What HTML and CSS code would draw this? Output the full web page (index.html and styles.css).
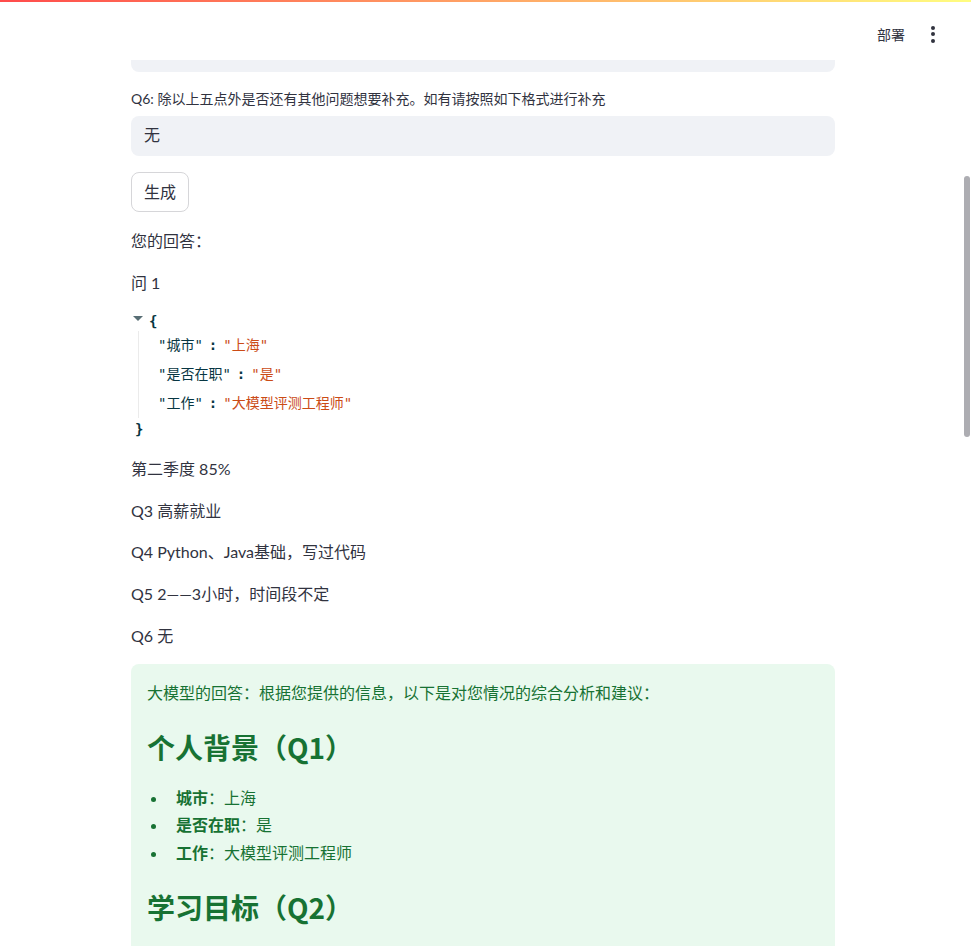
FILE: index.html
```html
<!DOCTYPE html>
<html lang="zh-CN">
<head>
<meta charset="utf-8">
<title>问卷</title>
<link rel="stylesheet" href="styles.css">
</head>
<body>
<div class="topbar"></div>
<header class="header">
  <span class="deploy">部署</span>
  <span class="kebab"><i></i><i></i><i></i></span>
</header>
<div class="scrollbar"></div>
<main class="main">
  <div class="input-tail"></div>

  <div class="widget">
    <label class="label">Q6: 除以上五点外是否还有其他问题想要补充。如有请按照如下格式进行补充</label>
    <div class="input">无</div>
  </div>

  <div><button class="btn">生成</button></div>

  <p class="para">您的回答：</p>
  <p class="para">问 1</p>

  <div class="json">
    <div class="json-open"><span class="caret"></span><span class="brace">{</span></div>
    <div class="json-body">
      <div class="json-row"><span class="key">"城市"</span><span class="colon">:</span><span class="val">"上海"</span></div>
      <div class="json-row"><span class="key">"是否在职"</span><span class="colon">:</span><span class="val">"是"</span></div>
      <div class="json-row"><span class="key">"工作"</span><span class="colon">:</span><span class="val">"大模型评测工程师"</span></div>
    </div>
    <div class="json-close"><span class="brace">}</span></div>
  </div>

  <p class="para">第二季度 85%</p>
  <p class="para">Q3 高薪就业</p>
  <p class="para">Q4 Python、Java基础，写过代码</p>
  <p class="para">Q5 2——3小时，时间段不定</p>
  <p class="para">Q6 无</p>

  <div class="success">
    <p class="s-para">大模型的回答：根据您提供的信息，以下是对您情况的综合分析和建议：</p>
    <h3 class="s-h3">个人背景（Q1）</h3>
    <ul class="s-list">
      <li><strong>城市</strong>：上海</li>
      <li><strong>是否在职</strong>：是</li>
      <li><strong>工作</strong>：大模型评测工程师</li>
    </ul>
    <h3 class="s-h3">学习目标（Q2）</h3>
  </div>
</main>
</body>
</html>
```

FILE: styles.css
```css
html, body {
  margin: 0;
  padding: 0;
  background: #ffffff;
  overflow: hidden;
  height: 946px;
}

body {
  font-family: Lato, "Noto Sans CJK SC", "Noto Sans", sans-serif;
  color: #31333f;
  font-size: 16px;
  line-height: 1.6;
  position: relative;
}

.topbar {
  height: 2px;
  background: linear-gradient(90deg, #ff4b4b, #fffd80);
}

.header {
  height: 58px;
  display: flex;
  justify-content: flex-end;
  align-items: center;
  padding-right: 36px;
  gap: 26px;
  box-sizing: border-box;
  padding-top: 6px;
}

.deploy {
  font-family: "Noto Sans CJK SC", sans-serif;
  font-size: 14px;
  line-height: 20px;
  color: #31333f;
}

.kebab {
  display: flex;
  flex-direction: column;
  gap: 2.5px;
  width: 4px;
}

.kebab i {
  display: block;
  width: 4px;
  height: 4px;
  border-radius: 50%;
  background: #31333f;
}

.scrollbar {
  position: absolute;
  left: 964px;
  top: 176px;
  width: 6px;
  height: 261px;
  border-radius: 3px;
  background: #adadb2;
}

.main {
  width: 704px;
  margin-left: 131px;
  display: flex;
  flex-direction: column;
  gap: 16px;
}

.input-tail {
  height: 12px;
  background: #f0f2f6;
  border-radius: 0 0 8px 8px;
}

.widget {
  display: flex;
  flex-direction: column;
}

.label {
  font-size: 14px;
  line-height: 22px;
  min-height: 24px;
  margin-bottom: 4px;
  color: #31333f;
}

.input {
  height: 40px;
  line-height: 38px;
  background: #f0f2f6;
  border-radius: 8px;
  padding: 0 13px;
  font-size: 16px;
}

.btn {
  height: 40px;
  padding: 0 12px 3px;
  background: #ffffff;
  border: 1px solid #d6d6d9;
  border-radius: 8px;
  font-family: "Noto Sans CJK SC", sans-serif;
  font-size: 16px;
  color: #31333f;
  line-height: 1;
}

.para {
  margin: 0;
  line-height: 25.6px;
}

.json {
  font-family: "DejaVu Sans Mono", "Liberation Mono", "Noto Sans CJK SC", monospace;
  font-size: 14px;
  color: #073642;
}

.json-open {
  height: 20px;
  display: flex;
  align-items: center;
}

.caret {
  display: inline-block;
  width: 0;
  height: 0;
  border-left: 5px solid transparent;
  border-right: 5px solid transparent;
  border-top: 5px solid #586e75;
  margin-left: 2px;
  margin-right: 6px;
  margin-top: -6px;
}

.brace {
  font-weight: bold;
  color: #073642;
}

.json-body {
  margin-left: 7px;
  border-left: 1px solid #ebebeb;
  padding-left: 19px;
}

.json-row {
  height: 29px;
  line-height: 29px;
  white-space: nowrap;
}

.key {
  color: #073642;
}

.colon {
  font-weight: bold;
  margin: 0 6px;
  color: #073642;
}

.val {
  color: #cb4b16;
}

.json-close {
  height: 22px;
  line-height: 22px;
  padding-left: 4px;
}

.success {
  background: #e9f9ee;
  color: #177233;
  border-radius: 8px;
  padding: 16px 16px 40px;
}

.s-para {
  margin: 0 0 16px 0;
  line-height: 25.6px;
}

.s-h3 {
  font-family: "Noto Sans CJK SC", sans-serif;
  font-size: 28px;
  font-weight: 700;
  line-height: 1.2;
  margin: 0;
  padding: 9.6px 0 17.6px 0;
}

.s-list {
  margin: 0 0 16px 0;
  padding-left: 21px;
}

.s-list li {
  margin-top: 2px;
  padding-left: 8px;
  line-height: 25.6px;
}

.s-list strong {
  font-weight: 700;
}
```
